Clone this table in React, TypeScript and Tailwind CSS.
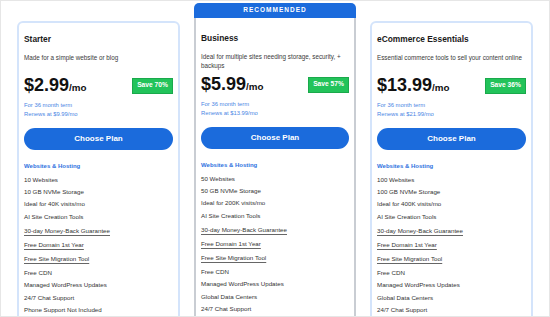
import React from 'react';

type Feature = { text: string; link?: boolean };

type Plan = {
    name: string;
    description: string;
    price: string;
    save: string;
    renews: string;
    recommended?: boolean;
    features: Feature[];
};

const plans: Plan[] = [
    {
        name: "Starter",
        description: "Made for a simple website or blog",
        price: "$2.99",
        save: "Save 70%",
        renews: "Renews at $9.99/mo",
        features: [
            { text: "10 Websites" },
            { text: "10 GB NVMe Storage" },
            { text: "Ideal for 40K visits/mo" },
            { text: "AI Site Creation Tools" },
            { text: "30-day Money-Back Guarantee", link: true },
            { text: "Free Domain 1st Year", link: true },
            { text: "Free Site Migration Tool", link: true },
            { text: "Free CDN" },
            { text: "Managed WordPress Updates" },
            { text: "24/7 Chat Support" },
            { text: "Phone Support Not Included" },
        ],
    },
    {
        name: "Business",
        description: "Ideal for multiple sites needing storage, security, + backups",
        price: "$5.99",
        save: "Save 57%",
        renews: "Renews at $13.99/mo",
        recommended: true,
        features: [
            { text: "50 Websites" },
            { text: "50 GB NVMe Storage" },
            { text: "Ideal for 200K visits/mo" },
            { text: "AI Site Creation Tools" },
            { text: "30-day Money-Back Guarantee", link: true },
            { text: "Free Domain 1st Year", link: true },
            { text: "Free Site Migration Tool", link: true },
            { text: "Free CDN" },
            { text: "Managed WordPress Updates" },
            { text: "Global Data Centers" },
            { text: "24/7 Chat Support" },
        ],
    },
    {
        name: "eCommerce Essentials",
        description: "Essential commerce tools to sell your content online",
        price: "$13.99",
        save: "Save 36%",
        renews: "Renews at $21.99/mo",
        features: [
            { text: "100 Websites" },
            { text: "100 GB NVMe Storage" },
            { text: "Ideal for 400K visits/mo" },
            { text: "AI Site Creation Tools" },
            { text: "30-day Money-Back Guarantee", link: true },
            { text: "Free Domain 1st Year", link: true },
            { text: "Free Site Migration Tool", link: true },
            { text: "Free CDN" },
            { text: "Managed WordPress Updates" },
            { text: "Global Data Centers" },
            { text: "24/7 Chat Support" },
        ],
    },
];

function PlanBody({ plan }: { plan: Plan }) {
    const links = plan.features.filter((f) => f.link);
    const first = plan.features.slice(0, 4);
    const rest = plan.features.slice(4 + links.length);

    return (
        <div className={`px-[5px] ${plan.recommended ? "pt-[13px]" : "pt-[9px]"}`}>
            <h2 className="text-[8.4px] leading-[14px] font-bold text-[#1a1a1a]">{plan.name}</h2>
            <p className="mt-[6.5px] h-[18px] text-[6.3px] leading-[9px] text-[#3a3a3a]">{plan.description}</p>
            <div className="mt-[5px] flex items-start justify-between">
                <div className="flex items-baseline text-[#111] font-bold">
                    <span className="text-[18px] leading-[18px]">{plan.price}</span>
                    <span className="text-[9.8px] leading-[18px]">/mo</span>
                </div>
                <span className="mt-[2px] h-[16px] px-[4px] bg-[#22c35a] text-white text-[6.7px] font-bold flex items-center border border-[#1aa94b]">
                    {plan.save}
                </span>
            </div>
            <div className="mt-[4.5px] text-[5.85px] leading-[9px] text-[#4a86e4]">
                <div>For 36 month term</div>
                <div>{plan.renews}</div>
            </div>
            <button className="mt-[8.5px] w-full h-[22px] rounded-full bg-[#1b6bdc] text-white text-[8px] font-bold">
                Choose Plan
            </button>
            <div className="mt-[10.5px] text-[6px] leading-[12px] font-bold text-[#2f72e0]">Websites &amp; Hosting</div>
            <ul className="mt-[1.85px] text-[6.2px] text-[#333]">
                {first.map((f) => (
                    <li key={f.text} className="h-[12.3px] leading-[12.3px]">{f.text}</li>
                ))}
                <li className="pb-[1.5px]">
                    <ul>
                        {links.map((f) => (
                            <li key={f.text} className="h-[14.2px] pt-[1px] leading-[13.2px]">
                                <span className="underline decoration-[#666] underline-offset-[1.5px]">{f.text}</span>
                            </li>
                        ))}
                    </ul>
                </li>
                {rest.map((f) => (
                    <li key={f.text} className="h-[12.3px] leading-[12.3px]">{f.text}</li>
                ))}
            </ul>
        </div>
    );
}

function PlanCard({ plan }: { plan: Plan }) {
    if (plan.recommended) {
        return (
            <div className="w-[162px] shrink-0 rounded-t-[5px] overflow-hidden bg-white">
                <div className="h-[15px] bg-[#1b6bdc] text-white text-[6.5px] font-bold tracking-[1px] flex items-center justify-center leading-none">
                    RECOMMENDED
                </div>
                <div className="border-x-2 border-b-2 border-[#c9cdd3] h-[320px]">
                    <PlanBody plan={plan} />
                </div>
            </div>
        );
    }
    return (
        <div className="w-[163px] shrink-0 mt-[18px] border-2 border-[#d4e4fb] rounded-[6px] bg-white h-[320px]">
            <PlanBody plan={plan} />
        </div>
    );
}

export default function App() {
    return (
        <div className="w-[550px] h-[317px] overflow-hidden bg-white border border-[#e6e6e6] font-['Liberation_Sans',Arial,sans-serif]">
            <div className="flex gap-[14px] pl-[16px] pt-[2px]">
                {plans.map((plan) => (
                    <PlanCard key={plan.name} plan={plan} />
                ))}
            </div>
        </div>
    );
}
